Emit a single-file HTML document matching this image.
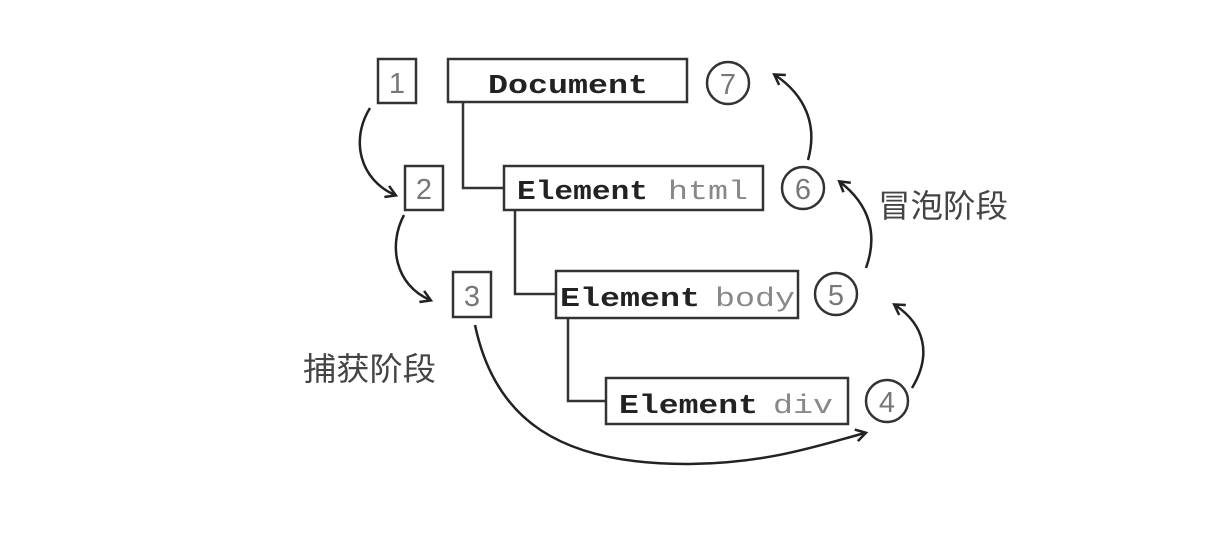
<!DOCTYPE html>
<html><head><style>
html,body{margin:0;padding:0;background:#fff;}
svg{display:block}
.m{font-family:"Liberation Mono",monospace;font-size:27px;}
.b{font-weight:bold;fill:#222}
.g{fill:#888}
.n{font-family:"Liberation Sans",sans-serif;font-size:29px;fill:#777}
.c{font-family:"Liberation Sans","Noto Sans CJK SC",sans-serif;font-size:32px;fill:#444}
</style></head><body>
<svg width="1232" height="548" viewBox="0 0 1232 548">
<defs><marker id="a" markerWidth="14" markerHeight="14" refX="10" refY="7" orient="auto" markerUnits="userSpaceOnUse"><path d="M1,1 L11,7 L1,13" fill="none" stroke="#222" stroke-width="2.5"/></marker></defs>
<g fill="none" stroke="#333" stroke-width="2.5">
<rect x="378" y="59" width="38" height="44"/>
<rect x="448" y="59" width="239" height="43"/>
<circle cx="728" cy="83" r="21"/>
<rect x="405" y="166" width="38" height="44"/>
<rect x="504" y="166" width="259" height="44"/>
<circle cx="803" cy="188" r="21"/>
<rect x="453" y="272" width="38" height="45"/>
<rect x="556" y="271" width="242" height="47"/>
<circle cx="836" cy="294" r="21"/>
<rect x="606" y="378" width="242" height="46"/>
<circle cx="887" cy="401" r="21"/>
<path d="M463 102 V188 H504 M515 210 V294 H556 M568 318 V401 H606"/>
</g>
<g fill="none" stroke="#222" stroke-width="2.5">
<path d="M370 108 C350 140 360 180 395 195" marker-end="url(#a)"/>
<path d="M404 215 C388 245 395 285 430 300" marker-end="url(#a)"/>
<path d="M475 325 C495 420 560 465 690 464 C770 463 820 445 865 433" marker-end="url(#a)"/>
<path d="M912 388 C932 355 925 325 895 305" marker-end="url(#a)"/>
<path d="M866 268 C878 235 870 205 840 182" marker-end="url(#a)"/>
<path d="M808 160 C818 125 805 95 775 75" marker-end="url(#a)"/>
</g>
<text class="n" x="397" y="93" text-anchor="middle">1</text>
<text class="n" x="424" y="199" text-anchor="middle">2</text>
<text class="n" x="472" y="306" text-anchor="middle">3</text>
<text class="n" x="728" y="94" text-anchor="middle">7</text>
<text class="n" x="803" y="199" text-anchor="middle">6</text>
<text class="n" x="836" y="305" text-anchor="middle">5</text>
<text class="n" x="887" y="412" text-anchor="middle">4</text>
<text class="m b" x="488" y="93" textLength="160" lengthAdjust="spacingAndGlyphs">Document</text>
<text class="m b" x="517" y="199" textLength="131" lengthAdjust="spacingAndGlyphs">Element</text>
<text class="m g" x="668" y="199" textLength="80" lengthAdjust="spacingAndGlyphs">html</text>
<text class="m b" x="560" y="306" textLength="140" lengthAdjust="spacingAndGlyphs">Element</text>
<text class="m g" x="715" y="306" textLength="80" lengthAdjust="spacingAndGlyphs">body</text>
<text class="m b" x="619" y="413" textLength="139" lengthAdjust="spacingAndGlyphs">Element</text>
<text class="m g" x="773" y="413" textLength="60" lengthAdjust="spacingAndGlyphs">div</text>
<text class="c" x="878" y="217" textLength="130" lengthAdjust="spacingAndGlyphs">冒泡阶段</text>
<text class="c" x="303" y="380" textLength="133" lengthAdjust="spacingAndGlyphs">捕获阶段</text>
</svg>
</body></html>
